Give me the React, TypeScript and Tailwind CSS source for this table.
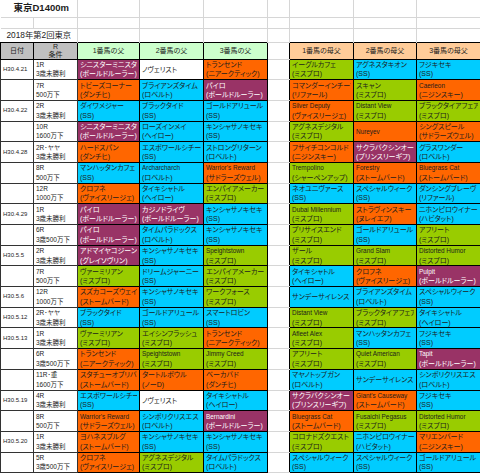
import React from 'react'

type Cell = [string, string, string]

type Row = {
  d?: string
  r: string
  c: string
  s: Cell[]
  m: Cell[]
}

const COLORS: Record<string, string> = {
  P: 'bg-[#993366] text-white',
  O: 'bg-[#ff6600] text-[#1c1c1c]',
  B: 'bg-[#00ccff] text-[#1c1c1c]',
  G: 'bg-[#99cc00] text-[#1c1c1c]',
  W: 'bg-white text-[#1c1c1c]',
}

const rows: Row[] = [
  { d: 'H30.4.21', r: '1R', c: '3歳未勝利',
    s: [['シニスターミニスタ', 'ボールドルーラー', 'P'], ['ノヴェリスト', '', 'W'], ['トランセンド', 'ニアークティック', 'O']],
    m: [['イーグルカフェ', 'ミスプロ', 'G'], ['アグネスタキオン', 'SS', 'B'], ['フジキセキ', 'SS', 'B']] },
  { r: '7R', c: '500万下',
    s: [['トビーズコーナー', 'ダンチヒ', 'O'], ['ブライアンズタイム', 'ロベルト', 'B'], ['パイロ', 'ボールドルーラー', 'P']],
    m: [['コマンダーインチーフ', 'リファール', 'O'], ['スキャン', 'ミスプロ', 'G'], ['Caerleon', 'ニジンスキー', 'O']] },
  { d: 'H30.4.22', r: '2R', c: '3歳未勝利',
    s: [['ダイワメジャー', 'SS', 'B'], ['ブラックタイド', 'SS', 'B'], ['ゴールドアリュール', 'SS', 'B']],
    m: [['Silver Deputy', 'ヴァイスリージェ', 'O'], ['Distant View', 'ミスプロ', 'G'], ['ブラックタイアフェア', 'ミスプロ', 'G']] },
  { r: '10R', c: '1600万下',
    s: [['シニスターミニスタ', 'ボールドルーラー', 'P'], ['ローズインメイ', 'ヘイロー', 'B'], ['キンシャサノキセキ', 'SS', 'B']],
    m: [['アグネスデジタル', 'ミスプロ', 'G'], ['Nureyev', '', 'O'], ['シングスピール', 'サドラーズウェル', 'O']] },
  { d: 'H30.4.28', r: '2R･ヤヤ', c: '3歳未勝利',
    s: [['ハードスパン', 'ダンチヒ', 'O'], ['エスポワールシチー', 'SS', 'B'], ['ストロングリターン', 'ロベルト', 'B']],
    m: [['フサイチコンコルド', 'ニジンスキー', 'O'], ['サクラバクシンオー', 'プリンスリーギフ', 'P'], ['グラスワンダー', 'ロベルト', 'B']] },
  { r: '8R', c: '500万下',
    s: [['マンハッタンカフェ', 'SS', 'B'], ['Archarcharch', 'ロベルト', 'B'], ["Warrior's Reward", 'サドラーズウェル', 'O']],
    m: [['Trempolino', 'シャーペンアップ', 'G'], ['Forestry', 'ストームバード', 'O'], ['Bluegrass Cat', 'ストームバード', 'O']] },
  { r: '12R', c: '1000万下',
    s: [['クロフネ', 'ヴァイスリージェ', 'O'], ['タイキシャトル', 'ヘイロー', 'B'], ['エンパイアメーカー', 'ミスプロ', 'G']],
    m: [['ネオユニヴァース', 'SS', 'B'], ['スペシャルウィーク', 'SS', 'B'], ['ダンシングブレーヴ', 'リファール', 'B']] },
  { d: 'H30.4.29', r: '1R', c: '3歳未勝利',
    s: [['パイロ', 'ボールドルーラー', 'P'], ['カジノドライヴ', 'ボールドルーラー', 'P'], ['キンシャサノキセキ', 'SS', 'B']],
    m: [['Dubai Millennium', 'ミスプロ', 'G'], ['ストラヴィンスキー', 'ヌレイエフ', 'O'], ['ニホンピロウイナー', 'ハビタット', 'B']] },
  { r: '6R', c: '3歳500万下',
    s: [['パイロ', 'ボールドルーラー', 'P'], ['タイムパラドックス', 'ロベルト', 'B'], ['キンシャサノキセキ', 'SS', 'B']],
    m: [['プリサイスエンド', 'ミスプロ', 'G'], ['ゴールドアリュール', 'SS', 'B'], ['アフリート', 'ミスプロ', 'G']] },
  { d: 'H30.5.5', r: '2R', c: '3歳未勝利',
    s: [['アドマイヤコジーン', 'グレイソヴリン', 'P'], ['キンシャサノキセキ', 'SS', 'B'], ['Speightstown', 'ミスプロ', 'G']],
    m: [['ザール', 'ミスプロ', 'G'], ['Grand Slam', 'ミスプロ', 'G'], ['Distorted Humor', 'ミスプロ', 'G']] },
  { r: '7R', c: '500万下',
    s: [['ヴァーミリアン', 'ミスプロ', 'G'], ['ドリームジャーニー', 'SS', 'B'], ['エンパイアメーカー', 'ミスプロ', 'G']],
    m: [['タイキシャトル', 'ヘイロー', 'B'], ['クロフネ', 'ヴァイスリージェ', 'O'], ['Pulpit', 'ボールドルーラー', 'P']] },
  { d: 'H30.5.6', r: '12R', c: '1000万下',
    s: [['スズカコーズウェイ', 'ストームバード', 'O'], ['キンシャサノキセキ', 'SS', 'B'], ['ワークフォース', 'ミスプロ', 'G']],
    m: [['サンデーサイレンス', '', 'B'], ['ブライアンズタイム', 'ロベルト', 'B'], ['スペシャルウィーク', 'SS', 'B']] },
  { d: 'H30.5.12', r: '2R･ヤヤ', c: '3歳未勝利',
    s: [['ブラックタイド', 'SS', 'B'], ['ゴールドアリュール', 'SS', 'B'], ['スマートロビン', 'SS', 'B']],
    m: [['Distant View', 'ミスプロ', 'G'], ['ブラックタイアフェア', 'ミスプロ', 'G'], ['タイキシャトル', 'ヘイロー', 'B']] },
  { d: 'H30.5.13', r: '1R', c: '3歳未勝利',
    s: [['ヴァーミリアン', 'ミスプロ', 'G'], ['エイシンフラッシュ', 'ミスプロ', 'G'], ['トランセンド', 'ニアークティック', 'O']],
    m: [['Afleet Alex', 'ミスプロ', 'G'], ['マンハッタンカフェ', 'SS', 'B'], ['フジキセキ', 'SS', 'B']] },
  { r: '6R', c: '3歳500万下',
    s: [['トランセンド', 'ニアークティック', 'O'], ['Speightstown', 'ミスプロ', 'G'], ['Jimmy Creed', 'ミスプロ', 'G']],
    m: [['アフリート', 'ミスプロ', 'G'], ['Quiet American', 'ミスプロ', 'G'], ['Tapit', 'ボールドルーラー', 'P']] },
  { r: '11R･重', c: '1600万下',
    s: [['スタチューオブリバティ', 'ストームバード', 'O'], ['タートルボウル', 'ノーD', 'O'], ['ベーカバド', 'ダンチヒ', 'O']],
    m: [['マヤノトップガン', 'ロベルト', 'B'], ['サンデーサイレンス', '', 'B'], ['シンボリクリスエス', 'ロベルト', 'B']] },
  { d: 'H30.5.19', r: '4R', c: '3歳未勝利',
    s: [['エスポワールシチー', 'SS', 'B'], ['ノヴェリスト', '', 'W'], ['タイキシャトル', 'ヘイロー', 'B']],
    m: [['サクラバクシンオー', 'プリンスリーギフ', 'P'], ["Giant's Causeway", 'ストームバード', 'O'], ['フジキセキ', 'SS', 'B']] },
  { r: '8R', c: '500万下',
    s: [["Warrior's Reward", 'サドラーズウェル', 'O'], ['シンボリクリスエス', 'ロベルト', 'B'], ['Bernardini', 'ボールドルーラー', 'P']],
    m: [['Bluegrass Cat', 'ストームバード', 'O'], ['Fusaichi Pegasus', 'ミスプロ', 'G'], ['Distorted Humor', 'ミスプロ', 'G']] },
  { d: 'H30.5.20', r: '1R', c: '3歳未勝利',
    s: [['ヨハネスブルグ', 'ストームバード', 'O'], ['キンシャサノキセキ', 'SS', 'B'], ['キンシャサノキセキ', 'SS', 'B']],
    m: [['コロナドズクエスト', 'ミスプロ', 'G'], ['ニホンピロウイナー', 'ハビタット', 'B'], ['マリエンバード', 'ニジンスキー', 'O']] },
  { r: '5R', c: '3歳500万下',
    s: [['クロフネ', 'ヴァイスリージェ', 'O'], ['アグネスデジタル', 'ミスプロ', 'G'], ['タイムパラドックス', 'ロベルト', 'B']],
    m: [['スペシャルウィーク', 'SS', 'B'], ['スペシャルウィーク', 'SS', 'B'], ['ゴールドアリュール', 'SS', 'B']] },
]

function Horse({ h }: { h: Cell }) {
  const [name, sire, col] = h
  const latin = /^[A-Za-z]/.test(name)
  return (
    <td className={`border border-black px-[2px] py-0 align-middle overflow-hidden whitespace-nowrap leading-[9.5px] ${COLORS[col]}`}>
      <div className={`overflow-hidden ${latin ? 'text-[6.4px]' : 'text-[7px]'}`}>{name}</div>
      {sire && <div className="overflow-hidden text-[7px]">({sire})</div>}
    </td>
  )
}

const grid = 'border border-[#d6d6d6]'

export default function App() {
  return (
    <div className="w-[480px] h-[473px] overflow-hidden bg-white text-[#1c1c1c] font-['Liberation_Sans','Noto_Sans_CJK_JP',sans-serif] [font-feature-settings:'palt']">
      <table className="table-fixed border-collapse w-[480px]">
        <colgroup>
          <col className="w-[33px]" />
          <col className="w-[44px]" />
          <col className="w-[62px]" />
          <col className="w-[64px]" />
          <col className="w-[64px]" />
          <col className="w-[22px]" />
          <col className="w-[64px]" />
          <col className="w-[63px]" />
          <col className="w-[64px]" />
        </colgroup>
        <tbody>
          {/* タイトル */}
          <tr className="h-[17px]">
            <td colSpan={2} className={`${grid} border-t-0 border-l-0 pl-[13px] text-[9.5px] font-bold whitespace-nowrap`}>東京D1400m</td>
            {[0, 1, 2, 3, 4, 5, 6].map(i => <td key={i} className={`${grid} border-t-0`} />)}
          </tr>
          <tr className="h-[11px]">
            <td className={`${grid} border-l-0`} />
            {[0, 1, 2, 3, 4, 5, 6, 7].map(i => <td key={i} className={grid} />)}
          </tr>
          <tr className="h-[14px]">
            <td colSpan={2} className={`${grid} border-l-0 border-b-0 pl-[6px] text-[8.3px] whitespace-nowrap`}>2018年第2回東京</td>
            {[0, 1, 2, 3, 4, 5, 6].map(i => <td key={i} className={`${grid} border-b-0`} />)}
          </tr>

          {/* 見出し */}
          <tr className="h-[17px] text-[7px] leading-[8px]">
            <th className="border border-black bg-[#c0c0c0] font-normal">日付</th>
            <th className="border border-black bg-[#c0c0c0] font-normal">R<br />条件</th>
            <th className="border border-black bg-[#ccffcc] font-normal">1番馬の父</th>
            <th className="border border-black bg-[#ccffcc] font-normal">2番馬の父</th>
            <th className="border border-black bg-[#ccffcc] font-normal">3番馬の父</th>
            <th className="border-y border-x-0 border-[#d6d6d6]" />
            <th className="border border-black bg-[#ffcc99] font-normal">1番馬の母父</th>
            <th className="border border-black bg-[#ffcc99] font-normal">2番馬の母父</th>
            <th className="border border-black bg-[#ffcc99] font-normal">3番馬の母父</th>
          </tr>

          {rows.map((row, i) => (
            <tr key={i} className="h-[20.7px]">
              <td className="border border-[#333] pl-[2px] align-middle text-[6px] whitespace-nowrap">{row.d}</td>
              <td className="border border-[#333] pl-[2px] align-middle text-[6.5px] leading-[9.5px] whitespace-nowrap">
                <div>{row.r}</div>
                <div>{row.c}</div>
              </td>
              {row.s.map((h, j) => <Horse key={j} h={h} />)}
              <td className="border-y border-x-0 border-[#d6d6d6]" />
              {row.m.map((h, j) => <Horse key={j} h={h} />)}
            </tr>
          ))}
        </tbody>
      </table>
    </div>
  )
}
